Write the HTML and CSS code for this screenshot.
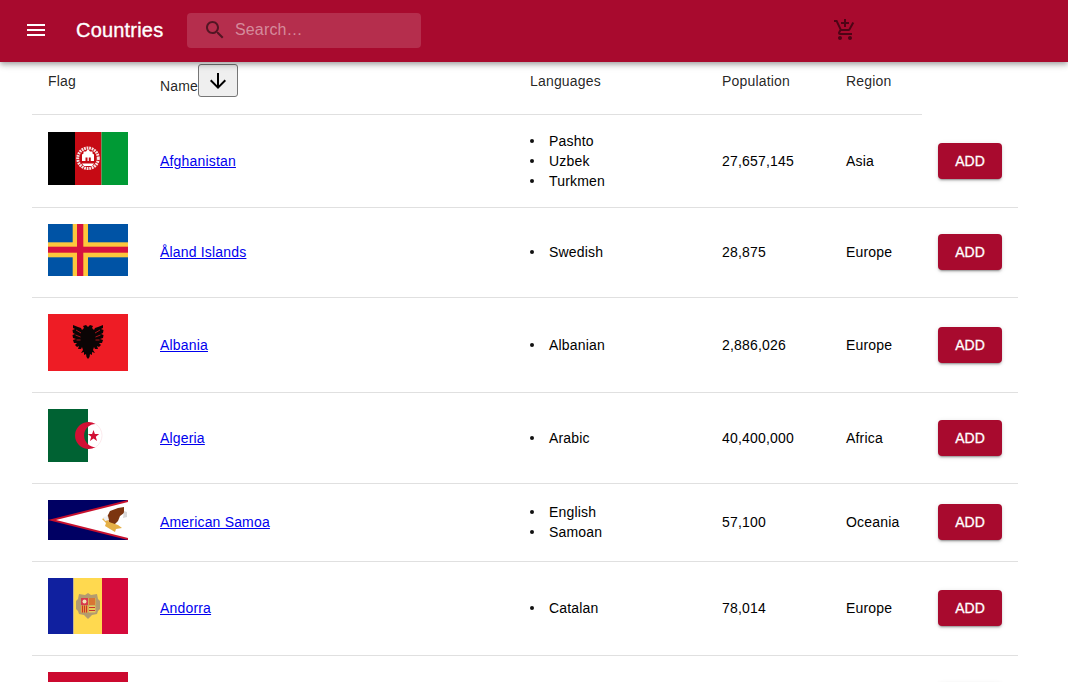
FILE: index.html
```html
<!DOCTYPE html>
<html lang="en">
<head>
<meta charset="utf-8">
<title>Countries</title>
<link rel="stylesheet" href="styles.css">
</head>
<body>
<header class="appbar">
  <button class="menu-btn" aria-label="Menu"><svg class="icon-white" width="24" height="24" viewBox="0 0 24 24"><path d="M3 18h18v-2H3v2zm0-5h18v-2H3v2zm0-7v2h18V6H3z"/></svg></button>
  <h1 class="title">Countries</h1>
  <div class="search">
    <svg class="search-icon" width="24" height="24" viewBox="0 0 24 24"><path d="M15.5 14h-.79l-.28-.27C15.41 12.59 16 11.11 16 9.5 16 5.91 13.09 3 9.5 3S3 5.91 3 9.5 5.91 16 9.5 16c1.61 0 3.09-.59 4.23-1.57l.27.28v.79l5 4.99L20.49 19l-4.99-5zm-6 0C7.01 14 5 11.99 5 9.5S7.01 5 9.5 5 14 7.01 14 9.5 11.99 14 9.5 14z"/></svg>
    <span class="search-text">Search…</span>
  </div>
  <svg class="cart" width="24" height="24" viewBox="0 0 24 24"><path d="M11 9h2V6h3V4h-3V1h-2v3H8v2h3v3zm-4 9c-1.1 0-1.99.9-1.99 2S5.9 22 7 22s2-.9 2-2-.9-2-2-2zm10 0c-1.1 0-1.99.9-1.99 2s.89 2 1.99 2 2-.9 2-2-.9-2-2-2zm-9.83-3.25l.03-.12.9-1.63h7.45c.75 0 1.41-.41 1.75-1.03l3.86-7.01L19.42 4h-.01l-1.1 2-2.76 5H8.53l-.13-.27L6.16 6l-.95-2-.94-2H1v2h2l3.6 7.59-1.35 2.45c-.16.28-.25.61-.25.96 0 1.1.9 2 2 2h12v-2H7.42c-.13 0-.25-.11-.25-.25z"/></svg>
</header>
<main class="content">
<table class="countries">
  <colgroup><col class="c-flag"><col class="c-name"><col class="c-lang"><col class="c-pop"><col class="c-region"><col class="c-add"></colgroup>
  <thead>
    <tr>
      <th>Flag</th>
      <th><div class="sort-head"><span class="sort-label">Name</span><button class="sort-btn" aria-label="Sort"><svg width="24" height="24" viewBox="0 0 24 24"><path d="M20 12l-1.41-1.41L13 16.17V4h-2v12.17l-5.58-5.59L4 12l8 8 8-8z"/></svg></button></div></th>
      <th>Languages</th>
      <th>Population</th>
      <th>Region</th>
    </tr>
  </thead>
  <tbody>
    <tr>
      <td class="flag-cell"><svg class="flag" width="80" height="53" viewBox="0 0 80 53">
        <rect width="27" height="53" fill="#000"/><rect x="27" width="26.5" height="53" fill="#c60a14"/><rect x="53.5" width="26.5" height="53" fill="#009a35"/>
        <circle cx="40" cy="26.300" r="10.300" fill="none" stroke="#f7e3e3" stroke-width="3" stroke-dasharray="1.800 .8"/>
        <path d="M40 17l2 2.500h2.500v2l1.500 1v6.500h-12v-6.500l1.500-1v-2H38z" fill="#fff"/><path d="M37.500 25.500h2v4h-2zM40.800 25.500h2v4h-2z" fill="#c60a14"/><path d="M34 31.500h12l-2 2.500h-8z" fill="#fff"/>
      </svg></td>
      <td><a href="#">Afghanistan</a></td>
      <td class="lang-cell"><ul><li>Pashto</li><li>Uzbek</li><li>Turkmen</li></ul></td>
      <td>27,657,145</td><td>Asia</td><td><button class="add">ADD</button></td>
    </tr>
    <tr class="odd-row">
      <td class="flag-cell"><svg class="flag" width="80" height="52" viewBox="0 0 80 52">
        <rect width="80" height="52" fill="#0053a5"/><rect x="24.7" width="15.3" height="52" fill="#fdc73c"/><rect y="18.3" width="80" height="15" fill="#fdc73c"/>
        <rect x="29" width="6.3" height="52" fill="#d7113f"/><rect y="22.7" width="80" height="6" fill="#d7113f"/>
      </svg></td>
      <td><a href="#">Åland Islands</a></td>
      <td class="lang-cell"><ul><li>Swedish</li></ul></td>
      <td>28,875</td><td>Europe</td><td><button class="add">ADD</button></td>
    </tr>
    <tr>
      <td class="flag-cell"><svg class="flag" width="80" height="57" viewBox="0 0 80 57">
        <rect width="80" height="57" fill="#ee1c25"/>
        <g fill="#0b0505">
          <path d="M40 13L38 11 35 12l1 2-2 2-1-2-3-1-5-2v3l2 1-2.500 1 .5 3 2 1-2.500 1 .5 3 3 1-3 1 1 3h3l-2 2 2 2 2-1-1 3h3l1-2 1 3-2 3 3-1v3l2-1 .5 3 1.500 2z"/>
          <path d="M40 13l2-2 3 1-1 2 2 2 1-2 3-1 5-2v3l-2 1 2.500 1-.5 3-2 1 2.500 1-.5 3-3 1 3 1-1 3h-3l2 2-2 2-2-1 1 3h-3l-1-2-1 3 2 3-3-1v3l-2-1-.5 3-1.500 2z"/>
        </g>
        <path d="M28 16l5 3M27.500 21l5 2M28.500 26l4 0M52 16l-5 3M52.500 21l-5 2M51.500 26l-4 0" stroke="#ee1c25" stroke-width=".7"/>
      </svg></td>
      <td><a href="#">Albania</a></td>
      <td class="lang-cell"><ul><li>Albanian</li></ul></td>
      <td>2,886,026</td><td>Europe</td><td><button class="add">ADD</button></td>
    </tr>
    <tr>
      <td class="flag-cell"><svg class="flag" width="80" height="53" viewBox="0 0 80 53">
        <rect width="40" height="53" fill="#006233"/>
        <path d="M47.600 15A13.500 13.500 0 0 1 47.600 38" fill="none" stroke="#f8dbe1" stroke-width=".6"/>
        <path d="M47.600 15A13.500 13.500 0 1 0 47.600 38A11.500 11.500 0 1 1 47.600 15z" fill="#d21034"/>
        <path d="M45.500 21l1.400 4.100h4.300l-3.400 2.600 1.200 4.200-3.500-2.500-3.500 2.500 1.200-4.200-3.400-2.600h4.300z" fill="#d21034"/>
      </svg></td>
      <td><a href="#">Algeria</a></td>
      <td class="lang-cell"><ul><li>Arabic</li></ul></td>
      <td>40,400,000</td><td>Africa</td><td><button class="add">ADD</button></td>
    </tr>
    <tr class="odd-row">
      <td class="flag-cell"><svg class="flag" width="80" height="40" viewBox="0 0 80 40">
        <rect width="80" height="40" fill="#000063"/><path d="M80 0L0 20l80 20z" fill="#c8102e"/><path d="M80 2L8 20l72 18z" fill="#fff"/>
        <path d="M76 7l-6 1-8 3-3 6 3 7 4 1 4-4 2-5 4-3z" fill="#7c3510"/><path d="M54 19l5-2 2 5 9 3 4 3-6 1-1 3-5-3-5-3 1-3z" fill="#e5b046"/><path d="M76 11l3 1v5l-4 1z" fill="#d9d9d9"/><path d="M55 17l5-1 1 4-4 1z" fill="#f1f1f1"/>
      </svg></td>
      <td><a href="#">American Samoa</a></td>
      <td class="lang-cell"><ul><li>English</li><li>Samoan</li></ul></td>
      <td>57,100</td><td>Oceania</td><td><button class="add">ADD</button></td>
    </tr>
    <tr class="odd-row">
      <td class="flag-cell"><svg class="flag" width="80" height="56" viewBox="0 0 80 56">
        <rect width="25.500" height="56" fill="#10209f"/><rect x="25.500" width="28.500" height="56" fill="#ffd94f"/><rect x="54" width="26" height="56" fill="#d50a3c"/>
        <path d="M31 16l6 1 3-2 3 2 6-1 1 5 2 2v8l-2 2-1 3-5 1-3 3-1 1-1-1-3-3-5-1-1-3-2-2v-8l2-2z" fill="#b39b6f"/>
        <rect x="33" y="20" width="7" height="7" fill="#d83a4c"/><rect x="40.500" y="20" width="7" height="7" fill="#e8b93a"/><rect x="33" y="27.500" width="7" height="7" fill="#e8a23a"/><rect x="40.500" y="27.500" width="7" height="7" fill="#ecc95a"/>
        <path d="M42 20v7M44 20v7M46 20v7M34.500 27.500v7M36.500 27.500v7M38.500 27.500v7" stroke="#c8322e" stroke-width="1"/><path d="M41 29.500h6M41 32.500h6" stroke="#c8322e" stroke-width="1.200"/><circle cx="36.500" cy="23.500" r="2" fill="#f3e2b8"/>
      </svg></td>
      <td><a href="#">Andorra</a></td>
      <td class="lang-cell"><ul><li>Catalan</li></ul></td>
      <td>78,014</td><td>Europe</td><td><button class="add">ADD</button></td>
    </tr>
    <tr>
      <td class="flag-cell"><svg class="flag" width="80" height="53" viewBox="0 0 80 53">
        <rect width="80" height="27" fill="#cc092f"/><rect y="27" width="80" height="26" fill="#000"/>
      </svg></td>
      <td></td><td></td><td></td><td></td>
      <td><button class="add" aria-label="Add"></button></td>
    </tr>
  </tbody>
</table>
</main>
</body>
</html>
```
FILE: styles.css
```css
html, body {
  margin: 0;
  height: 682px;
  overflow: hidden;
  background: #fff;
  font-family: "Liberation Sans", Arial, sans-serif;
  font-size: 14px;
  line-height: 20px;
  letter-spacing: .18px;
  color: #000;
}

.appbar {
  position: absolute;
  top: 0;
  left: 0;
  right: 0;
  z-index: 2;
  box-sizing: border-box;
  height: 62px;
  padding-bottom: 2px;
  display: flex;
  align-items: center;
  background: #a80a2e;
  box-shadow: 0 2px 4px -1px rgba(0,0,0,.2), 0 4px 5px 0 rgba(0,0,0,.14), 0 1px 10px 0 rgba(0,0,0,.12);
}

.menu-btn {
  display: flex;
  margin: 0 0 0 24px;
  padding: 0;
  border: 0;
  background: none;
}

.icon-white { fill: #fff; }

.title {
  margin: 0 0 0 28px;
  width: 111px;
  font-size: 20px;
  line-height: 24px;
  font-weight: 400;
  letter-spacing: .2px;
  color: #fff;
  -webkit-text-stroke: .35px #fff;
}

.search {
  display: flex;
  align-items: center;
  width: 234px;
  height: 35px;
  border-radius: 4px;
  background: rgba(255,255,255,.15);
}

.search-icon {
  margin-left: 16px;
  fill: rgba(0,0,0,.54);
}

.search-text {
  margin-left: 8px;
  font-size: 16px;
  letter-spacing: .15px;
  color: rgba(255,255,255,.45);
}

.cart {
  margin-left: 412px;
  fill: rgba(0,0,0,.54);
}

.content {
  padding: 48px 0 0 32px;
}

.countries {
  width: 986px;
  table-layout: fixed;
  border-collapse: separate;
  border-spacing: 0;
}

.c-flag { width: 112px; }
.c-name { width: 370px; }
.c-lang { width: 192px; }
.c-pop { width: 124px; }
.c-region { width: 92px; }
.c-add { width: 96px; }

th, td {
  padding: 16px;
  text-align: left;
  font-weight: 400;
  border-bottom: 1px solid #e0e0e0;
}

th {
  padding-bottom: 17px;
  color: rgba(0,0,0,.87);
}

.sort-head {
  display: flex;
  align-items: flex-end;
}

.sort-label { padding-bottom: 1px; }

.sort-btn {
  display: flex;
  align-items: center;
  justify-content: center;
  width: 40px;
  height: 33px;
  padding: 0;
  border: 1px solid #767676;
  border-radius: 3px;
  background: #efefef;
}

.flag-cell .flag {
  display: inline;
}

/* rows of odd height: centre their cells on the upper pixel */
.odd-row td:not(.flag-cell) {
  padding-top: 15px;
  padding-bottom: 17px;
}

.odd-row .lang-cell ul {
  margin: 15px 0 17px;
}

.lang-cell ul {
  margin: 16px 0;
  padding: 0;
  list-style: none;
}

td.lang-cell,
.odd-row td.lang-cell {
  padding-top: 0;
  padding-bottom: 0;
}

.lang-cell li {
  display: flex;
  align-items: center;
  gap: 15px;
}

.lang-cell li::before {
  content: "";
  width: 4px;
  height: 4px;
  border-radius: 50%;
  background: #111;
}

a { color: #0000ee; }

.add {
  display: block;
  width: 64px;
  height: 36px;
  padding: 0;
  border: 0;
  border-radius: 4px;
  background: #a80a2e;
  color: #fff;
  font: 400 14px/20px "Liberation Sans", Arial, sans-serif;
  -webkit-text-stroke: .3px #fff;
  box-shadow: 0 3px 1px -2px rgba(0,0,0,.2), 0 2px 2px 0 rgba(0,0,0,.14), 0 1px 5px 0 rgba(0,0,0,.12);
}
```
